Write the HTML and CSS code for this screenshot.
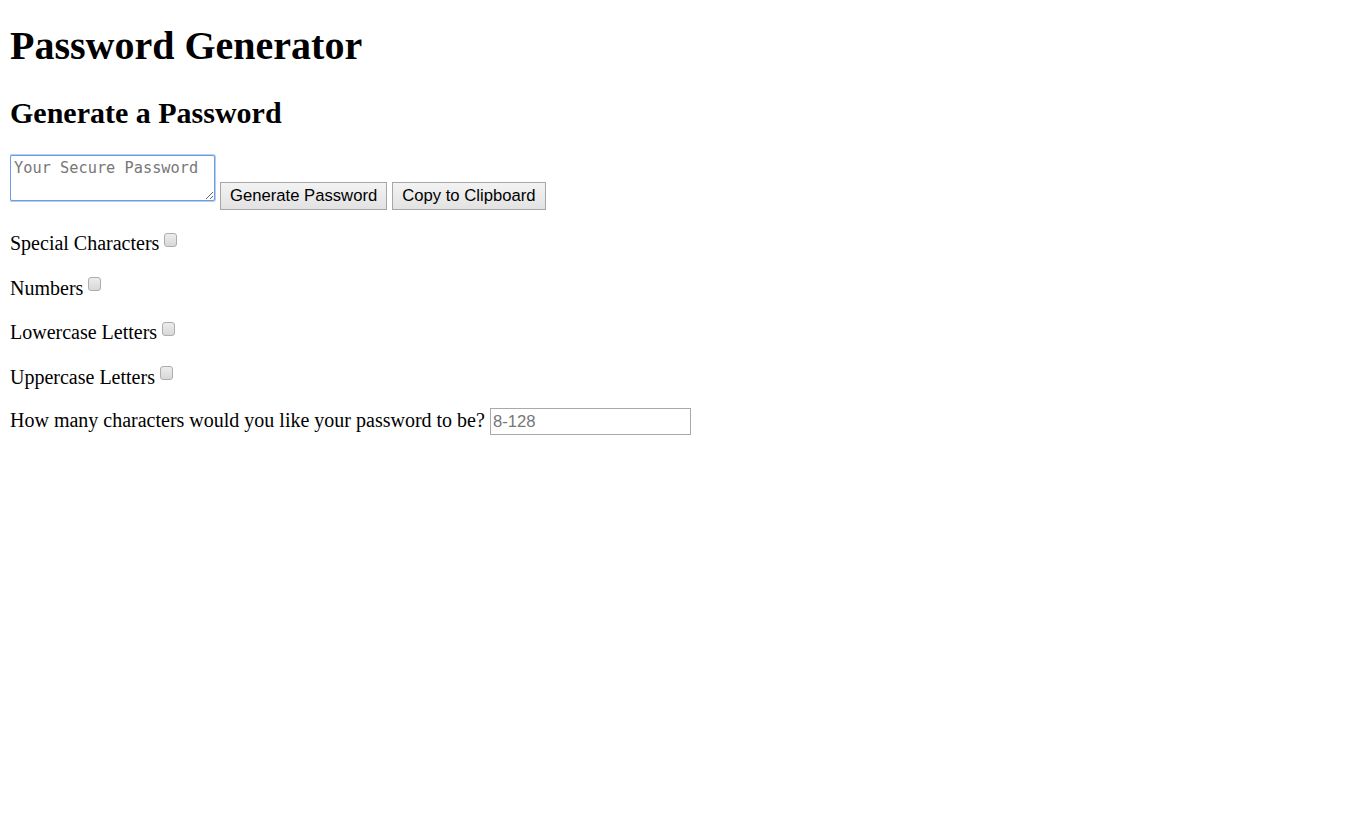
FILE: index.html
```html
<!DOCTYPE html>
<html lang="en">
<head>
<meta charset="utf-8">
<title>Password Generator</title>
<link rel="stylesheet" href="styles.css">
</head>
<body>
<h1 class="title">Password Generator</h1>
<h2 class="subtitle">Generate a Password</h2>
<div class="gen-row">
  <textarea class="pw-box" placeholder="Your Secure Password"></textarea>
  <button class="btn" type="button">Generate Password</button>
  <button class="btn" type="button">Copy to Clipboard</button>
</div>
<p class="opt"><label for="special">Special Characters</label><input class="chk" id="special" type="checkbox"></p>
<p class="opt"><label for="numbers">Numbers</label><input class="chk" id="numbers" type="checkbox"></p>
<p class="opt"><label for="lower">Lowercase Letters</label><input class="chk" id="lower" type="checkbox"></p>
<p class="opt"><label for="upper">Uppercase Letters</label><input class="chk" id="upper" type="checkbox"></p>
<p class="opt"><label for="len">How many characters would you like your password to be?</label> <input class="len" id="len" type="text" placeholder="8-128"></p>
</body>
</html>
```

FILE: styles.css
```css
html, body {
  background: #fff;
}
body {
  margin: 10px;
  font-family: "Liberation Serif", "Times New Roman", serif;
  font-size: 20px;
  color: #000;
}
.title {
  font-size: 40px;
  margin: 12px 0 27px;
}
.subtitle {
  font-size: 30px;
  margin: 25px 0;
}
.gen-row {
  margin: 0;
}
.pw-box {
  box-sizing: border-box;
  width: 205px;
  height: 46px;
  font-family: "DejaVu Sans Mono", "Liberation Mono", monospace;
  font-size: 15.3px;
  line-height: 18px;
  padding: 3px 3px;
  border: 1px solid #6a9de6;
  border-radius: 2px;
  outline: none;
  box-shadow: 0 0 0 1px #b4cff2;
  vertical-align: baseline;
  margin: 0;
}
.pw-box::placeholder {
  color: #777;
}
.btn {
  font-family: "Liberation Sans", Arial, sans-serif;
  font-size: 16.67px;
  height: 28px;
  padding: 1px 9px;
  border: 1px solid #a6a6a6;
  border-radius: 0;
  background: linear-gradient(#f3f3f3, #e2e2e2);
  color: #000;
  margin: 0;
  vertical-align: baseline;
}
.opt {
  margin: 20px 0;
}
.chk {
  appearance: none;
  box-sizing: border-box;
  width: 13px;
  height: 14px;
  margin: 2.5px 3px 3px 5px;
  border: 1px solid #adadad;
  border-radius: 3px;
  background: linear-gradient(#ececec, #d8d8d8);
  vertical-align: baseline;
}
.len {
  box-sizing: border-box;
  width: 201px;
  height: 27px;
  font-family: "Liberation Sans", Arial, sans-serif;
  font-size: 16.67px;
  padding: 1px 2px;
  border: 1px solid #a9a9a9;
  margin: 0;
}
.len::placeholder {
  color: #777;
}
```
